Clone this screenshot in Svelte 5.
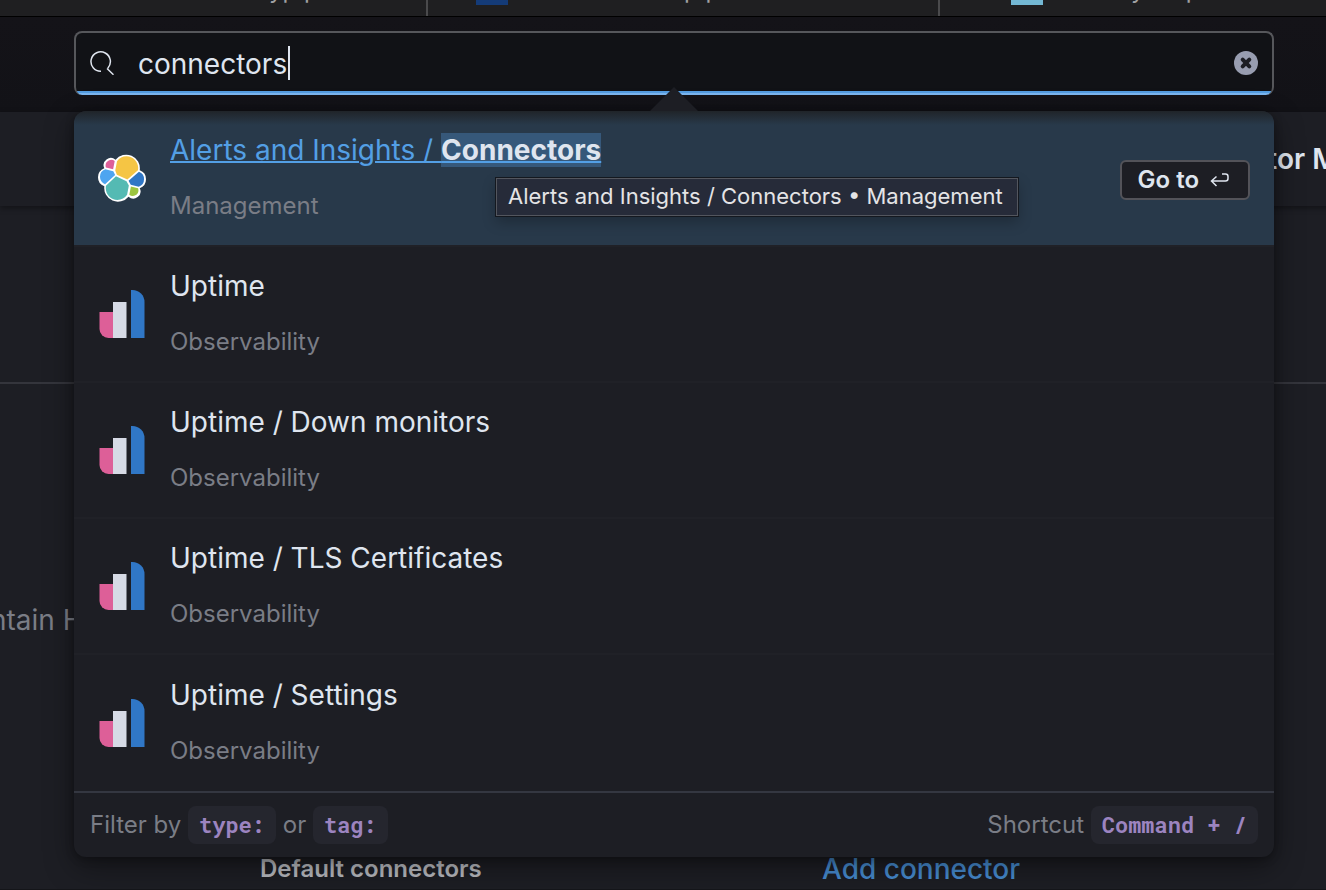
<script>
  let query = $state('connectors');

  const results = [
    { title: 'Uptime', section: 'Observability' },
    { title: 'Uptime / Down monitors', section: 'Observability' },
    { title: 'Uptime / TLS Certificates', section: 'Observability' },
    { title: 'Uptime / Settings', section: 'Observability' }
  ];
</script>

<div class="page">
  <div class="tabs">
    <div class="tab first"><span>yp p</span></div>
    <div class="tab"><i class="favicon navy"></i><span>p p</span></div>
    <div class="tab"><i class="favicon sky"></i><span>y an p</span></div>
  </div>

  <header>
    <div class="search">
      <label class="field">
        <svg class="glass" viewBox="0 0 24 24" aria-hidden="true">
          <path d="M11 20.3A9.7 9.7 0 1 1 17.8 17.2M17 17.5L23.5 23.7" />
        </svg>
        <input type="text" aria-label="Search" bind:value={query} />
        <i class="caret"></i>
        <button class="clear" aria-label="Clear input" onclick={() => (query = '')}>
          <svg viewBox="0 0 24 24" aria-hidden="true">
            <circle cx="12" cy="12" r="12" />
            <path d="M8.7 8.7L15.3 15.3M15.3 8.7L8.7 15.3" />
          </svg>
        </button>
      </label>

      <div class="panel">
        <i class="arrow"></i>
        <ul>
          <li class="row active">
            <svg class="logo" viewBox="0 0 32 32" aria-hidden="true">
              <path fill="#fff" d="M32 16.77a6.334 6.334 0 00-4.2-5.966 9.065 9.065 0 00-16.1-6.9 4.788 4.788 0 00-7.476 5.665A6.391 6.391 0 000 15.562a6.338 6.338 0 004.227 5.968 9.1 9.1 0 0016.106 6.9 4.767 4.767 0 007.476-5.66A6.386 6.386 0 0032 16.77" />
              <path fill="#f5c544" d="M12.58 13.787l7.002 3.211 7.066-6.213a7.849 7.849 0 00.152-1.557c0-4.287-3.475-7.776-7.746-7.776a7.73 7.73 0 00-6.38 3.386l-1.175 6.122 1.08 2.827z" />
              <path fill="#54bab3" d="M5.333 21.215c-.1.51-.15 1.03-.15 1.57 0 4.3 3.494 7.8 7.788 7.8a7.77 7.77 0 006.426-3.407l1.166-6.105-1.557-2.989-7.03-3.217-6.643 6.348z" />
              <path fill="#dd5f98" d="M5.288 9.067l4.8 1.137L11.14 4.73a3.8 3.8 0 00-6.1 3.047c0 .445.087.886.248 1.29z" />
              <path fill="#4ea5f0" d="M4.872 10.214a5.34 5.34 0 00-3.558 5.03c0 2.195 1.35 4.155 3.378 4.94l6.734-6.112-1.236-2.653-5.318-1.205z" />
              <path fill="#9cc53f" d="M20.873 27.178a3.782 3.782 0 006.1-3.027c0-.455-.08-.9-.244-1.29l-4.8-1.13-1.056 5.447z" />
              <path fill="#3077c6" d="M21.848 20.563l5.283 1.237a5.345 5.345 0 003.56-5.029 5.338 5.338 0 00-3.381-4.938l-6.91 6.073 1.448 2.657z" />
            </svg>
            <div class="text">
              <a class="title" href="#connectors">Alerts and Insights / <mark>Connectors</mark></a>
              <div class="section">Management</div>
            </div>
            <button class="goto">
              Go to
              <svg viewBox="0 0 20 16" aria-hidden="true">
                <path d="M12 2H15.500Q18 2 18 4.500V6.500Q18 9 15.500 9H2M6.500 4.500L1.500 9L6.500 14" />
              </svg>
            </button>
            <div class="tooltip" role="tooltip">Alerts and Insights / Connectors • Management</div>
          </li>
          {#each results as item}
            <li class="row">
              <svg class="logo" viewBox="0 0 48 48" aria-hidden="true">
                <path fill="#dd5f98" d="M1.500 22H15V48H10.500A9 9 0 0 1 1.500 39Z" />
                <path fill="#d6dae5" d="M15 12H28.500V48H15Z" />
                <path fill="#3077c6" d="M33 0H34.500A12 12 0 0 1 46.500 12V48H33Z" />
              </svg>
              <div class="text">
                <div class="title">{item.title}</div>
                <div class="section">{item.section}</div>
              </div>
            </li>
          {/each}
        </ul>
        <footer>
          <p>Filter by <code>type:</code> or <code>tag:</code></p>
          <p>Shortcut <code>Command + /</code></p>
        </footer>
      </div>
    </div>
  </header>

  <div class="subheader">tor M</div>

  <main>
    <div class="intro"></div>
    <div class="details">ntain H</div>
    <div class="links">
      <strong>Default connectors</strong>
      <a href="#add">Add connector</a>
    </div>
  </main>
</div>

<style>
  :global(body) {
    margin: 0;
    background: #1d1e24;
  }
  .page {
    min-height: 100vh;
    display: flex;
    flex-direction: column;
    overflow: hidden;
    box-sizing: border-box;
    border-bottom: 1px solid #141519;
    font-family: Inter, sans-serif;
    font-size: 28px;
    color: #dfe5ef;
  }
  .tabs {
    height: 16px;
    display: grid;
    grid-template-columns: 428fr 512fr 386fr;
    background: #1f1f21;
    border-bottom: 1px solid #000;
    overflow: hidden;
    font-size: 24px;
    color: #a0a0a2;
  }
  .tab {
    display: flex;
    gap: 176px;
    height: 16px;
    box-sizing: border-box;
    padding-left: 48px;
    border-right: 2px solid #4a4a4c;
  }
  .tab.first {
    padding-left: 269px;
  }
  .tab:last-child {
    gap: 88px;
    padding-left: 71px;
    border-right: 0;
  }
  .tab span {
    line-height: 28px;
    margin-top: -24px;
  }
  .favicon {
    width: 32px;
    height: 5px;
  }
  .navy { background: #143b78; }
  .sky { background: #73b7d3; }

  header {
    height: 95px;
    box-sizing: border-box;
    padding: 14px 52px 0 74px;
    background: linear-gradient(#141318, #121217);
  }
  .search {
    position: relative;
    z-index: 1;
  }
  .field {
    display: flex;
    align-items: center;
    position: relative;
    height: 64px;
    box-sizing: border-box;
    padding: 0 14px 2px;
    border: 2px solid #56575b;
    border-bottom: 0;
    border-radius: 8px;
    background: linear-gradient(#111216 58px, #539ce0 58px, #539ce0 60px, #7bb6ef 60px);
  }
  .glass {
    width: 24px;
    height: 24px;
    fill: none;
    stroke: #dfe5ef;
    stroke-width: 1.5;
  }
  .clear svg {
    display: block;
    width: 24px;
    height: 24px;
    fill: #989db0;
  }
  .clear path {
    stroke: #1d1e24;
    stroke-width: 4;
    stroke-linecap: round;
  }
  input {
    flex: 1;
    min-width: 0;
    margin-left: 24px;
    padding: 2px 0 0;
    border: 0;
    outline: 0;
    background: none;
    font: inherit;
    color: #dfe5ef;
  }
  .caret {
    position: absolute;
    left: 212px;
    top: 13px;
    width: 2px;
    height: 34px;
    background: #dfe5ef;
  }
  .clear {
    padding: 0;
    border: 0;
    background: none;
  }

  .panel {
    position: absolute;
    top: 80px;
    left: 0;
    right: 0;
    border-radius: 12px;
    background: #1d1e24;
    box-shadow: 0 2px 8px rgba(0, 0, 0, 0.3), 0 10px 30px rgba(0, 0, 0, 0.4);
  }
  .arrow {
    position: absolute;
    top: -24px;
    left: calc(50% - 24px);
    width: 48px;
    height: 24px;
    background: #1d1e24;
    clip-path: polygon(50% 0, 100% 100%, 0 100%);
  }
  ul {
    margin: 0;
    padding: 0;
    list-style: none;
  }
  .row {
    position: relative;
    display: flex;
    align-items: center;
    gap: 24px;
    height: 136px;
    box-sizing: border-box;
    padding: 0 24px;
    border-bottom: 2px solid #202127;
  }
  .row:last-child {
    border-bottom: 0;
  }
  .active {
    border-radius: 12px 12px 0 0;
    background: linear-gradient(#202429, #28394a 14px) padding-box;
  }
  .logo {
    flex: none;
    width: 48px;
    height: 48px;
  }
  .text {
    flex: 1;
  }
  .title {
    display: block;
    line-height: 40px;
    margin-bottom: 16px;
  }
  a.title {
    color: #539fe5;
    text-decoration: underline;
    text-decoration-thickness: 2px;
  }
  mark {
    background: #36587a;
    color: #dfe5ef;
    font-weight: 700;
  }
  .section {
    line-height: 40px;
    font-size: 24px;
    color: #7a7d86;
  }
  .goto {
    display: flex;
    align-items: center;
    gap: 11px;
    height: 40px;
    margin-top: 4px;
    padding: 0 18px 0 16px;
    border: 2px solid #535359;
    border-radius: 6px;
    background: #1d1e24;
    font: 600 24px/36px Inter, sans-serif;
    color: #dfe5ef;
  }
  .goto svg {
    width: 20px;
    height: 16px;
    fill: none;
    stroke: #dfe5ef;
    stroke-width: 1.5;
  }
  .tooltip {
    position: absolute;
    top: 67px;
    left: 422px;
    padding: 0 14px 2px 11px;
    border: 1px solid #53565e;
    background: #262b39;
    box-shadow: 0 0 0 1px #14181f, 0 6px 14px rgba(0, 0, 0, 0.25);
    font-size: 22px;
    line-height: 34px;
    white-space: nowrap;
    color: #e4e4e6;
  }
  footer {
    display: flex;
    justify-content: space-between;
    align-items: center;
    height: 64px;
    padding: 0 16px;
    border-top: 2px solid #343741;
    font-size: 24px;
    color: #7a7d86;
  }
  p {
    margin: 0;
  }
  code {
    display: inline-block;
    padding: 0 11px;
    border-radius: 8px;
    background: #25262e;
    font: 700 22px/38px "Roboto Mono", "Liberation Mono", monospace;
    color: #9c84c0;
  }

  .subheader {
    height: 94px;
    display: flex;
    justify-content: flex-end;
    align-items: center;
    margin-right: -12px;
    background: #1d1e24;
    box-shadow: 0 2px 6px rgba(0, 0, 0, 0.4);
    font-weight: 600;
  }
  main {
    flex: 1;
    display: flex;
    flex-direction: column;
  }
  .intro {
    height: 176px;
    border-bottom: 2px solid #34353c;
  }
  .details {
    flex: 1;
    margin-left: -10px;
    padding-top: 216px;
    line-height: 40px;
    color: #7a7d86;
  }
  .links {
    display: grid;
    grid-template-columns: 562fr 504fr;
    padding-left: 260px;
    line-height: 40px;
  }
  strong {
    font-size: 24px;
    font-weight: 600;
    color: #b9bbc0;
  }
  .links a {
    color: #468bd0;
    font-weight: 500;
    text-decoration: none;
  }
</style>
